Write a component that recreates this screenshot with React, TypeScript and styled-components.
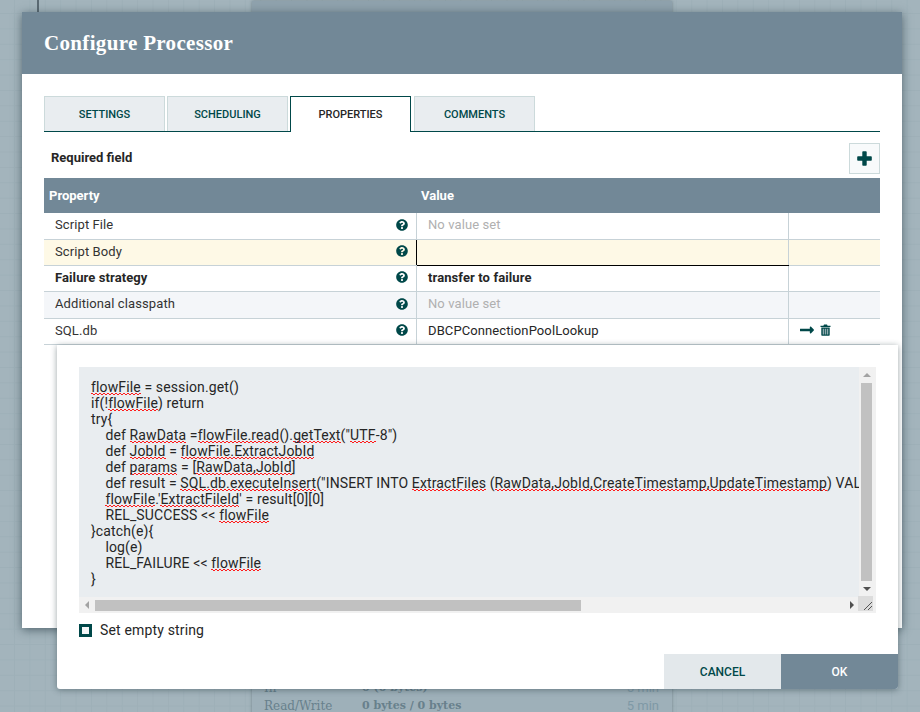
import React from "react";
import styled, { createGlobalStyle } from "styled-components";
import { FaQuestionCircle, FaLongArrowAltRight } from "react-icons/fa";

const Global = createGlobalStyle`
  html, body { margin: 0; padding: 0; width: 920px; height: 712px; overflow: hidden; }
  body { font-family: Roboto, "Liberation Sans", sans-serif; color: #262626; }
  #root { width: 920px; height: 712px; }
`;

const Canvas = styled.div`
  position: relative;
  width: 920px;
  height: 712px;
  overflow: hidden;
  background-color: #a3b4bc;
  background-image:
    linear-gradient(to right, #9eb0b8 1px, transparent 1px),
    linear-gradient(to bottom, #9eb0b8 1px, transparent 1px);
  background-size: 15.4px 15.4px;
  background-position: 14px 13px;
`;

const Connector = styled.div`
  position: absolute;
  left: 37px;
  top: 0;
  width: 2px;
  height: 12px;
  background: #5b6a73;
`;

const Processor = styled.div`
  position: absolute;
  left: 252px;
  top: 1px;
  width: 420px;
  height: 740px;
  background: linear-gradient(#8fa2ad 0 60px, #9eb0b9 60px);
  box-shadow: 0 0 3px rgba(40, 60, 70, 0.4);
`;

const ProcessorRows = styled.div`
  position: absolute;
  left: 12px;
  right: 0;
  top: 679px;
  display: grid;
  grid-template-columns: 98px 1fr auto;
  row-gap: 2px;
  font-family: "DejaVu Serif", serif;
  font-size: 12px;
  line-height: 16px;
  color: #68808c;
  padding-right: 13px;
`;

const ProcessorValue = styled.span`
  font-weight: 700;
  font-size: 11px;
`;

const ProcessorTime = styled.span`
  font-family: Roboto, sans-serif;
  font-size: 13px;
  color: #7f99a6;
`;

const Dialog = styled.section`
  position: absolute;
  left: 22px;
  top: 12px;
  width: 880px;
  height: 616px;
  background: #fff;
  box-shadow: 0 2px 9px rgba(30, 50, 60, 0.6);
  display: flex;
  flex-direction: column;
`;

const DialogHeader = styled.header`
  height: 62px;
  flex: none;
  background: #728897;
  display: flex;
  align-items: center;
  padding-left: 22px;
`;

const Title = styled.h1`
  margin: 0;
  font-family: "Liberation Serif", serif;
  font-weight: 700;
  font-size: 21px;
  color: #fff;
  letter-spacing: 0.33px;
`;

const DialogBody = styled.div`
  padding: 22px 22px 0;
`;

const Tabs = styled.div`
  height: 36px;
  display: flex;
  border-bottom: 1px solid #004849;
  box-sizing: border-box;
`;

const Tab = styled.div<{ $active?: boolean; $gap?: number }>`
  width: 121px;
  margin-right: ${(p) => p.$gap ?? 2}px;
  height: ${(p) => (p.$active ? 36 : 35)}px;
  box-sizing: border-box;
  display: flex;
  align-items: center;
  justify-content: center;
  font-size: 11px;
  font-weight: 500;
  background: ${(p) => (p.$active ? "#fff" : "#e9edf0")};
  color: ${(p) => (p.$active ? "#262626" : "#004849")};
  border: 1px solid ${(p) => (p.$active ? "#004849" : "#ccdadb")};
  border-bottom: 0;
  position: relative;
  z-index: ${(p) => (p.$active ? 1 : 0)};
`;

const TableBar = styled.div`
  height: 46px;
  display: flex;
  align-items: flex-start;
  justify-content: space-between;
  box-sizing: border-box;
  padding-top: 11px;
`;

const Required = styled.div`
  padding: 7px 0 0 7px;
  font-size: 13px;
  line-height: 15px;
  font-weight: 700;
  color: #262626;
`;

const AddButton = styled.button`
  width: 31px;
  height: 31px;
  padding: 0;
  box-sizing: border-box;
  background: #f8fafb;
  border: 1px solid #ccdadb;
  display: flex;
  align-items: center;
  justify-content: center;
`;

const PlusSvg = styled.svg`
  width: 15px;
  height: 15px;
  flex: none;
`;

const HeaderRow = styled.div`
  height: 35px;
  background: #728897;
  display: grid;
  grid-template-columns: 372px 1fr;
  align-items: center;
  font-size: 13px;
  font-weight: 700;
  color: #fff;
`;

const HeaderCell = styled.div`
  padding-left: 5px;
`;

const Row = styled.div<{ $bg?: string; $tall?: boolean }>`
  height: ${(p) => (p.$tall ? 27 : 26)}px;
  box-sizing: border-box;
  display: grid;
  grid-template-columns: 373px 372px 1fr;
  background: ${(p) => p.$bg ?? "#fff"};
  border-bottom: 1px solid #c7d2d7;
  font-size: 13px;
  letter-spacing: 0.1px;
  color: #262626;
`;

const NameCell = styled.div<{ $bold?: boolean }>`
  box-sizing: border-box;
  display: flex;
  align-items: center;
  justify-content: space-between;
  padding: 0 8px 3px 11px;
  border-right: 1px solid #c7d2d7;
  font-weight: ${(p) => (p.$bold ? 700 : 400)};
  color: ${(p) => (p.$bold ? "#262626" : "#333")};
`;

const ValueCell = styled.div<{ $muted?: boolean; $bold?: boolean; $editing?: boolean }>`
  box-sizing: border-box;
  display: flex;
  align-items: center;
  padding: 0 0 ${(p) => (p.$muted ? 3 : 2)}px 11px;
  font-weight: ${(p) => (p.$bold ? 700 : 400)};
  color: ${(p) => (p.$muted ? "#b0b0b0" : "#262626")};
  border-right: 1px solid #c7d2d7;
  ${(p) => (p.$editing ? "box-shadow: -1px 0 0 #000, 0 1px 0 #000;" : "")}
`;

const ActionCell = styled.div`
  display: flex;
  align-items: center;
  gap: 5px;
  padding: 0 0 3px 10px;
  color: #004849;
`;

const HelpIcon = styled(FaQuestionCircle)`
  font-size: 12px;
  color: #004849;
  flex: none;
`;

const ArrowIcon = styled(FaLongArrowAltRight)`
  font-size: 16px;
  color: #004849;
`;

const TrashSvg = styled.svg`
  width: 11px;
  height: 12px;
  flex: none;
`;

const Editor = styled.section`
  position: absolute;
  left: 57px;
  top: 345px;
  width: 841px;
  height: 344px;
  background: #fff;
  border-radius: 0 0 3px 3px;
  box-shadow: 0 1px 6px rgba(30, 50, 60, 0.45);
  display: flex;
  flex-direction: column;
`;

const EditorFrame = styled.div`
  margin: 22px 22px 0;
  width: 797px;
  height: 246px;
  flex: none;
  background: #e9edf0;
  display: grid;
  grid-template-columns: 1fr 17px;
  grid-template-rows: 1fr 16px;
`;

const Code = styled.pre`
  margin: 0;
  padding: 12px 0 0 12px;
  overflow: hidden;
  font-family: Roboto, "Liberation Sans", sans-serif;
  font-size: 14px;
  letter-spacing: 0.13px;
  line-height: 16px;
  color: #262626;
  white-space: pre;
`;

const Misspelled = styled.span`
  background-image:
    linear-gradient(90deg, #ff1a1a 50%, transparent 50%),
    linear-gradient(90deg, #ff1a1a 50%, transparent 50%);
  background-size: 4px 1px;
  background-repeat: repeat-x;
  background-position: 0 calc(100% - 1px), 2px 100%;
`;

const VScroll = styled.div`
  background: #f1f1f1;
  display: flex;
  flex-direction: column;
  align-items: center;
  padding: 0 4px 0 2px;
  box-sizing: border-box;
`;

const VThumb = styled.div`
  width: 11px;
  height: 198px;
  background: #c1c1c1;
  flex: none;
`;

const ArrowSlot = styled.div`
  height: 16px;
  width: 100%;
  flex: none;
  display: flex;
  align-items: center;
  justify-content: center;
`;

const TriUp = styled.div<{ $dark?: boolean }>`
  width: 0;
  height: 0;
  border-left: 4px solid transparent;
  border-right: 4px solid transparent;
  border-bottom: 4px solid ${(p) => (p.$dark ? "#505050" : "#a3a3a3")};
`;

const TriDown = styled(TriUp)`
  border-bottom: none;
  border-top: 4px solid #505050;
`;

const HScroll = styled.div`
  background: #f1f1f1;
  display: flex;
  align-items: center;
`;

const TriLeft = styled.div`
  width: 0;
  height: 0;
  border-top: 4px solid transparent;
  border-bottom: 4px solid transparent;
  border-right: 4px solid #a3a3a3;
  margin: 0 6px;
`;

const TriRight = styled.div`
  width: 0;
  height: 0;
  border-top: 4px solid transparent;
  border-bottom: 4px solid transparent;
  border-left: 4px solid #505050;
  margin-left: auto;
  margin-right: 5px;
`;

const HThumb = styled.div`
  width: 486px;
  height: 11px;
  background: #c1c1c1;
`;

const Corner = styled.div`
  background: #f1f1f1;
`;

const Grip = styled.svg`
  display: block;
  width: 15px;
  height: 15px;
  margin: -1px 0 0 -1px;
  background: #dcdcdc;
`;

const CheckRow = styled.label`
  display: flex;
  align-items: center;
  gap: 8px;
  margin: 8px 0 0 22px;
  font-size: 14px;
  letter-spacing: 0.16px;
  color: #262626;
  line-height: 18px;
`;

const CheckBox = styled.span`
  width: 13px;
  height: 13px;
  box-sizing: border-box;
  border: 3px solid #004849;
  background: #f4f6f7;
  flex: none;
`;

const Actions = styled.footer`
  margin-top: auto;
  display: flex;
  justify-content: flex-end;
`;

const ActionButton = styled.button<{ $primary?: boolean }>`
  width: 117px;
  height: 35px;
  border: 0;
  padding: 0;
  font-family: Roboto, "Liberation Sans", sans-serif;
  font-size: 12px;
  font-weight: 500;
  background: ${(p) => (p.$primary ? "#728897" : "#e3e8eb")};
  color: ${(p) => (p.$primary ? "#fff" : "#004849")};
  border-radius: ${(p) => (p.$primary ? "0 0 3px 0" : "0")};
`;

const rows: { name: string; value?: string; muted?: boolean; bold?: boolean; bg?: string; tall?: boolean; editing?: boolean; actions?: boolean }[] = [
  { name: "Script File", value: "No value set", muted: true, tall: true },
  { name: "Script Body", bg: "#fef9e6", editing: true },
  { name: "Failure strategy", value: "transfer to failure", bold: true },
  { name: "Additional classpath", value: "No value set", muted: true, bg: "#f4f6f9", tall: true },
  { name: "SQL.db", value: "DBCPConnectionPoolLookup", actions: true },
];

const W = Misspelled;

export default function App() {
  return (
    <Canvas>
      <Global />
      <Connector />
      <Processor>
        <ProcessorRows>
          <span>In</span>
          <ProcessorValue>0 (0 bytes)</ProcessorValue>
          <ProcessorTime>5 min</ProcessorTime>
          <span>Read/Write</span>
          <ProcessorValue>0 bytes / 0 bytes</ProcessorValue>
          <ProcessorTime>5 min</ProcessorTime>
        </ProcessorRows>
      </Processor>

      <Dialog>
        <DialogHeader>
          <Title>Configure Processor</Title>
        </DialogHeader>
        <DialogBody>
          <Tabs>
            <Tab>SETTINGS</Tab>
            <Tab>SCHEDULING</Tab>
            <Tab $active $gap={3}>PROPERTIES</Tab>
            <Tab>COMMENTS</Tab>
          </Tabs>
          <TableBar>
            <Required>Required field</Required>
            <AddButton aria-label="Add property">
              <PlusSvg viewBox="0 0 15 15">
                <path d="M5.3 1c0-.5.3-.8.8-.8h2.8c.5 0 .8.3.8.8v4.3H14c.5 0 .8.3.8.8v2.8c0 .5-.3.8-.8.8H9.7V14c0 .5-.3.8-.8.8H6.1c-.5 0-.8-.3-.8-.8V9.7H1c-.5 0-.8-.3-.8-.8V6.1c0-.5.3-.8.8-.8h4.3z" fill="#004849" />
              </PlusSvg>
            </AddButton>
          </TableBar>
          <HeaderRow>
            <HeaderCell>Property</HeaderCell>
            <HeaderCell>Value</HeaderCell>
          </HeaderRow>
          {rows.map((r) => (
            <Row key={r.name} $bg={r.bg} $tall={r.tall}>
              <NameCell $bold={r.bold}>
                {r.name}
                <HelpIcon />
              </NameCell>
              <ValueCell $muted={r.muted} $bold={r.bold} $editing={r.editing}>
                {r.value}
              </ValueCell>
              <ActionCell>
                {r.actions && (
                  <>
                    <ArrowIcon />
                    <TrashSvg viewBox="0 0 11 12">
                      <path d="M4 0.5h3l0.6 1.2H10.5v1.3H0.5V1.7h2.9z" fill="#004849" />
                      <path d="M1.3 3.5h8.4v7.2c0 .6-.4 1-1 1H2.3c-.6 0-1-.4-1-1z" fill="#004849" />
                      <path d="M2.7 4.7h1.4v5.8H2.7zM4.8 4.7h1.4v5.8H4.8zM6.9 4.7h1.4v5.8H6.9z" fill="#8fa9ad" />
                    </TrashSvg>
                  </>
                )}
              </ActionCell>
            </Row>
          ))}
        </DialogBody>
      </Dialog>

      <Editor>
        <EditorFrame>
          <Code>
            <W>flowFile</W>{" = session.get()\nif(!"}<W>flowFile</W>{") return\ntry{\n    def "}<W>RawData</W>{" ="}<W>flowFile.read</W>{"()."}<W>getText</W>{'("'}<W>UTF</W>{'-8")\n    def '}<W>JobId</W>{" = "}<W>flowFile.ExtractJobId</W>{"\n    def "}<W>params</W>{" = ["}<W>RawData,JobId</W>{"]\n    def result = "}<W>SQL.db.executeInsert</W>{'("INSERT INTO '}<W>ExtractFiles</W>{" ("}<W>RawData,JobId,CreateTimestamp,UpdateTimestamp</W>{") VALUES(?,?,?,?)\",[RawData,JobId])\n    "}<W>flowFile</W>{".'"}<W>ExtractFileId</W>{"' = result[0][0]\n    REL_SUCCESS << "}<W>flowFile</W>{"\n}catch(e){\n    log(e)\n    REL_FAILURE << "}<W>flowFile</W>{"\n}"}
          </Code>
          <VScroll>
            <ArrowSlot><TriUp /></ArrowSlot>
            <VThumb />
            <ArrowSlot><TriDown $dark /></ArrowSlot>
          </VScroll>
          <HScroll>
            <TriLeft />
            <HThumb />
            <TriRight />
          </HScroll>
          <Corner>
            <Grip viewBox="0 0 15 15">
              <path d="M6 14 14 6M10 14 14 10" stroke="#555" strokeWidth="1" fill="none" />
            </Grip>
          </Corner>
        </EditorFrame>
        <CheckRow>
          <CheckBox />
          Set empty string
        </CheckRow>
        <Actions>
          <ActionButton>CANCEL</ActionButton>
          <ActionButton $primary>OK</ActionButton>
        </Actions>
      </Editor>
    </Canvas>
  );
}
